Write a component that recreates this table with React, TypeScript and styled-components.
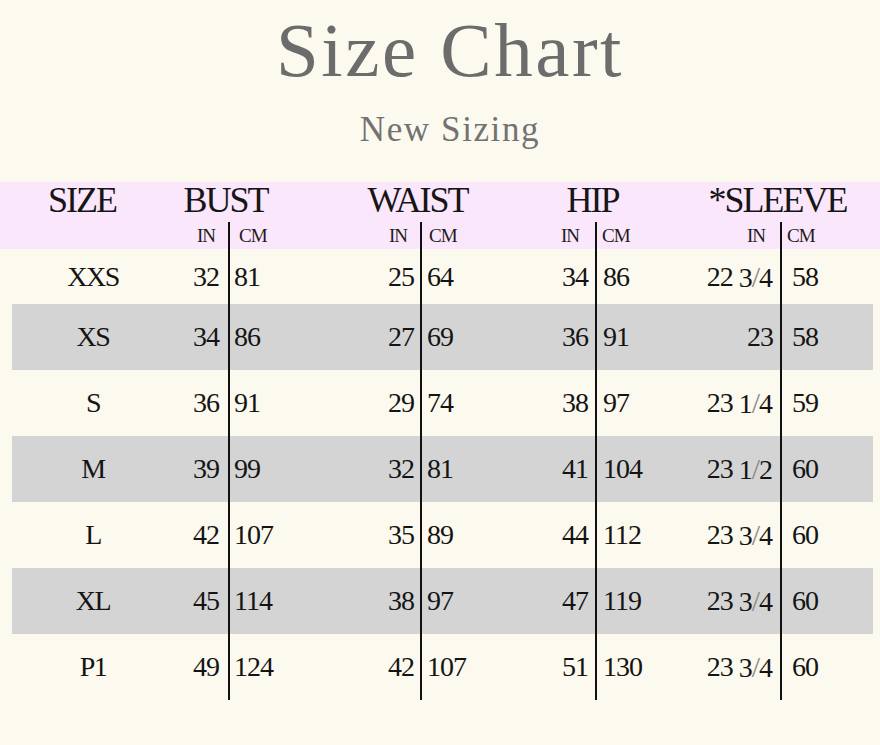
import React from "react";
import styled, { createGlobalStyle } from "styled-components";

const GlobalStyle = createGlobalStyle`
  html, body {
    margin: 0;
    padding: 0;
    background: #fcf9ee;
  }
  body {
    font-family: "Liberation Serif", "Times New Roman", serif;
    color: #141414;
  }
`;

const COLS = "107px 109px 109px 83px 83px 92px 92px 93px 93px";

const Page = styled.div`
  width: 880px;
  min-height: 745px;
  background: #fcf9ee;
  display: flex;
  flex-direction: column;
`;

const Title = styled.h1`
  margin: 12px 0 0;
  font-family: "Liberation Serif", serif;
  font-weight: 400;
  font-size: 77px;
  line-height: 77px;
  letter-spacing: 2.5px;
  padding-left: 20px;
  text-align: center;
  color: #6c6c6c;
`;

const Subtitle = styled.h2`
  margin: 23px 0 0;
  font-family: "Liberation Serif", serif;
  font-weight: 400;
  font-size: 35px;
  line-height: 35px;
  letter-spacing: 1.6px;
  padding-left: 20px;
  text-align: center;
  color: #727272;
`;

const HeaderBand = styled.div`
  margin-top: 35px;
  background: #fbe7fb;
  padding: 0 7px 0 12px;
`;

const HeaderGrid = styled.div`
  display: grid;
  grid-template-columns: ${COLS};
  grid-template-rows: 40px 27px;
`;

const HeadTitle = styled.div<{ $col: string; $pl?: number }>`
  grid-column: ${(p) => p.$col};
  grid-row: 1;
  font-size: 36px;
  line-height: 36px;
  letter-spacing: -2px;
  text-align: center;
  padding-left: ${(p) => p.$pl ?? 0}px;
  padding-right: ${(p) => (p.$pl ? 0 : 5)}px;
  color: #161616;
  white-space: nowrap;
`;

const SubLabel = styled.div<{ $col: number; $cm?: boolean; $pad: number }>`
  grid-column: ${(p) => p.$col};
  grid-row: 2;
  font-size: 19px;
  line-height: 27px;
  letter-spacing: -1px;
  color: #1c1c1c;
  text-align: ${(p) => (p.$cm ? "left" : "right")};
  padding-left: ${(p) => (p.$cm ? p.$pad : 0)}px;
  padding-right: ${(p) => (p.$cm ? 0 : p.$pad)}px;
  border-left: ${(p) => (p.$cm ? "2px solid #111" : "none")};
  white-space: nowrap;
`;

const Body = styled.div`
  padding: 0 7px 0 12px;
  display: flex;
  flex-direction: column;
`;

const Row = styled.div<{ $shade: boolean; $h: number }>`
  display: grid;
  grid-template-columns: ${COLS};
  height: ${(p) => p.$h}px;
  background: ${(p) => (p.$shade ? "#d4d4d4" : "transparent")};
`;

const SizeCell = styled.div<{ $pl: number }>`
  display: flex;
  align-items: center;
  justify-content: center;
  padding-left: ${(p) => p.$pl}px;
  font-size: 28px;
  letter-spacing: -1.5px;
  color: #141414;
  white-space: nowrap;
`;

const InCell = styled.div<{ $pr: number }>`
  display: flex;
  align-items: center;
  justify-content: flex-end;
  padding-right: ${(p) => p.$pr}px;
  font-size: 28px;
  letter-spacing: -1px;
  color: #141414;
  white-space: nowrap;
`;

const CmCell = styled.div<{ $pl: number }>`
  display: flex;
  align-items: center;
  border-left: 2px solid #111;
  padding-left: ${(p) => p.$pl}px;
  font-size: 28px;
  letter-spacing: -1px;
  color: #141414;
  white-space: nowrap;
`;

const Frac = styled.span`
  margin-left: 6px;
  letter-spacing: 0;
`;

const Slash = styled.span`
  color: #8a8a8a;
  font-size: 30px;
  margin: 0 -1px;
`;

type Pair = [string, string];
type SizeRow = {
  size: string;
  bust: Pair;
  waist: Pair;
  hip: Pair;
  sleeve: { whole: string; frac?: string; cm: string };
};

const rows: SizeRow[] = [
  { size: "XXS", bust: ["32", "81"], waist: ["25", "64"], hip: ["34", "86"], sleeve: { whole: "22", frac: "3/4", cm: "58" } },
  { size: "XS", bust: ["34", "86"], waist: ["27", "69"], hip: ["36", "91"], sleeve: { whole: "23", cm: "58" } },
  { size: "S", bust: ["36", "91"], waist: ["29", "74"], hip: ["38", "97"], sleeve: { whole: "23", frac: "1/4", cm: "59" } },
  { size: "M", bust: ["39", "99"], waist: ["32", "81"], hip: ["41", "104"], sleeve: { whole: "23", frac: "1/2", cm: "60" } },
  { size: "L", bust: ["42", "107"], waist: ["35", "89"], hip: ["44", "112"], sleeve: { whole: "23", frac: "3/4", cm: "60" } },
  { size: "XL", bust: ["45", "114"], waist: ["38", "97"], hip: ["47", "119"], sleeve: { whole: "23", frac: "3/4", cm: "60" } },
  { size: "P1", bust: ["49", "124"], waist: ["42", "107"], hip: ["51", "130"], sleeve: { whole: "23", frac: "3/4", cm: "60" } },
];

const groups = [
  { key: "bust", label: "BUST", col: 2, inPad: 13, cmPad: 9 },
  { key: "waist", label: "WAIST", col: 4, inPad: 13, cmPad: 7 },
  { key: "hip", label: "HIP", col: 6, inPad: 16, cmPad: 5 },
  { key: "sleeve", label: "*SLEEVE", col: 8, inPad: 15, cmPad: 5 },
];

const renderFrac = (frac: string) => {
  const [a, b] = frac.split("/");
  return (
    <Frac>
      {a}
      <Slash>/</Slash>
      {b}
    </Frac>
  );
};

export default function App() {
  return (
    <Page>
      <GlobalStyle />
      <Title>Size Chart</Title>
      <Subtitle>New Sizing</Subtitle>
      <HeaderBand>
        <HeaderGrid>
          <HeadTitle $col="1" $pl={33}>SIZE</HeadTitle>
          {groups.map((g) => (
            <HeadTitle key={g.key} $col={`${g.col} / span 2`}>
              {g.label}
            </HeadTitle>
          ))}
          {groups.map((g) => (
            <React.Fragment key={g.key}>
              <SubLabel $col={g.col} $pad={g.inPad}>IN</SubLabel>
              <SubLabel $col={g.col + 1} $cm $pad={g.cmPad}>CM</SubLabel>
            </React.Fragment>
          ))}
        </HeaderGrid>
      </HeaderBand>
      <Body>
        {rows.map((r, i) => (
          <Row key={r.size} $shade={i % 2 === 1} $h={i === 0 ? 55 : 66}>
            <SizeCell $pl={55}>{r.size}</SizeCell>
            <InCell $pr={9}>{r.bust[0]}</InCell>
            <CmCell $pl={4}>{r.bust[1]}</CmCell>
            <InCell $pr={6}>{r.waist[0]}</InCell>
            <CmCell $pl={5}>{r.waist[1]}</CmCell>
            <InCell $pr={7}>{r.hip[0]}</InCell>
            <CmCell $pl={6}>{r.hip[1]}</CmCell>
            <InCell $pr={7}>
              {r.sleeve.whole}
              {r.sleeve.frac ? renderFrac(r.sleeve.frac) : null}
            </InCell>
            <CmCell $pl={10}>{r.sleeve.cm}</CmCell>
          </Row>
        ))}
      </Body>
    </Page>
  );
}
